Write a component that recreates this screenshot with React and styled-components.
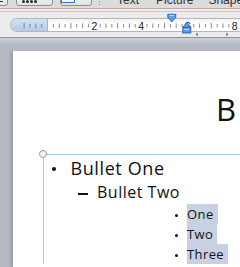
import React from "react";
import styled, { createGlobalStyle } from "styled-components";

const Global = createGlobalStyle`
  html, body { margin: 0; padding: 0; background: #b7bbc6; }
  body { width: 240px; height: 267px; overflow: hidden; }
  * { box-sizing: border-box; }
`;

const Screen = styled.div`
  width: 240px;
  height: 267px;
  overflow: hidden;
  display: flex;
  flex-direction: column;
  background: #b7bbc6;
`;

const Toolbar = styled.div`
  height: 9px;
  flex: none;
  display: flex;
  align-items: flex-start;
  overflow: hidden;
  background: #dcdcdc;
  border-bottom: 1px solid #bea79f;
`;

const ToolButton = styled.div`
  flex: none;
  height: 16px;
  margin-top: -10px;
  margin-left: ${(p) => p.$ml}px;
  width: ${(p) => p.$w}px;
  border: 1px solid #8e8e8e;
  border-radius: 3px;
  background: linear-gradient(#fbfbfb, #e4e4e4);
  display: flex;
  align-items: flex-end;
  justify-content: ${(p) => p.$justify || "flex-start"};
  padding: 0 ${(p) => p.$pr || 0}px 2px ${(p) => p.$pl || 0}px;
  gap: 1px;
`;

const Dot = styled.span`
  width: 3px;
  height: 3px;
  border-radius: 50%;
  background: #2a2a2a;
`;

const Bar = styled.span`
  width: 3px;
  height: 1px;
  margin-bottom: 1px;
  background: #333;
  box-shadow: 0 -2px 0 #333;
`;

const FrameIcon = styled.span`
  width: 14px;
  height: 10px;
  margin-bottom: 0;
  border: 1px solid #3a6ed4;
  background: #f4f7fd;
`;

const Grip = styled.span`
  flex: none;
  margin-left: 7px;
  margin-top: 1px;
  width: 1px;
  height: 1px;
  background: #888;
  box-shadow: 0 3px 0 #888;
`;

const Label = styled.span`
  flex: none;
  margin-left: ${(p) => p.$ml}px;
  margin-top: -6px;
  font: 12px/12px "Liberation Sans", Arial, sans-serif;
  color: #333;
  white-space: nowrap;
`;

const Seam = styled.div`
  height: 3px;
  flex: none;
  background: #eeeeee;
  border-bottom: 1px solid #d9c2ba;
`;

const RulerBand = styled.div`
  position: relative;
  height: 26px;
  flex: none;
  background: #ececec;
  border-bottom: 1px solid #8d9099;
  padding: 6px 0 0 10px;
`;

const Ruler = styled.div`
  position: relative;
  height: 14px;
  display: flex;
  background: linear-gradient(#f3f3f3, #ffffff 40%);
  border: 1px solid #b3b6bd;
  border-right: none;
  border-radius: 7px 0 0 7px;
  overflow: hidden;
`;

const MarginPart = styled.div`
  width: 37px;
  flex: none;
  background: linear-gradient(#d4e2f2, #b4cbe6);
  border-right: 1px solid #9fb6d4;
`;

const Overlay = styled.svg`
  position: absolute;
  left: 0;
  top: 0;
  pointer-events: none;
`;

const Workspace = styled.div`
  flex: 1;
  display: flex;
  padding: 13px 0 0 13px;
  background: linear-gradient(#cfd2d9, #b6bac5 6px);
`;

const Page = styled.div`
  flex: 1;
  background: #ffffff;
  box-shadow: -1px 0 0 #9da1ad, -3px 0 2px rgba(0, 0, 0, 0.12);
  padding-top: 43px;
  font-family: "Open Sans", "Noto Sans", sans-serif;
  color: #111;
`;

const Title = styled.div`
  font-size: 31px;
  line-height: 31px;
  padding-left: 203px;
  white-space: nowrap;
`;

const TextBox = styled.div`
  position: relative;
  margin: 29px 0 0 30px;
  border-top: 1px solid #abc5f0;
  border-left: 1px solid #abc5f0;
  padding-top: 1px;
`;

const Handle = styled.span`
  position: absolute;
  left: -5px;
  top: -5px;
  width: 8px;
  height: 8px;
  border: 1px solid #9a9a9a;
  border-radius: 50%;
  background: #f6f6f6;
`;

const Row = styled.div`
  display: flex;
  align-items: center;
  height: ${(p) => p.$h}px;
  padding-left: ${(p) => p.$indent}px;
  font-size: ${(p) => p.$fs}px;
  line-height: ${(p) => p.$h}px;
  letter-spacing: ${(p) => p.$ls}px;
  white-space: nowrap;
`;

const Marker = styled.span`
  flex: none;
  width: ${(p) => p.$w}px;
  display: flex;
  align-items: center;
  margin-top: ${(p) => p.$mt}px;
`;

const Bullet = styled.span`
  width: ${(p) => p.$d}px;
  height: ${(p) => p.$d}px;
  border-radius: 50%;
  background: #111;
`;

const Dash = styled.span`
  width: 10px;
  height: 1.6px;
  background: #111;
`;

const Selected = styled.span`
  display: inline-block;
  height: 100%;
  padding-right: 4px;
  background: #c7d1e3;
`;

const UNIT = 23.4;
const ZERO = 36.5;

function RulerMarks() {
  const ticks = [];
  for (let k = -4; k <= 36; k++) {
    const x = ZERO + k * (UNIT / 4);
    if (x < 3) continue;
    const whole = k % 4 === 0;
    const n = k / 4;
    if (whole && n >= 2 && n % 2 === 0) continue;
    if (k === 0) continue;
    const half = k % 2 === 0;
    const y1 = whole ? 4 : half ? 4.5 : 5;
    const y2 = whole ? 9.5 : half ? 9 : 8.5;
    ticks.push(<line key={k} x1={x} x2={x} y1={y1} y2={y2} stroke="#6e6e6e" strokeWidth="0.8" />);
  }
  const labels = [2, 4, 6, 8].map((n) => (
    <text
      key={n}
      x={ZERO + n * UNIT}
      y={10.6}
      textAnchor="middle"
      fontSize="10.5"
      fontFamily="Liberation Sans, Arial, sans-serif"
      fill="#222"
    >
      {n}
    </text>
  ));
  return (
    <Overlay width="240" height="12" viewBox="0 0 240 12">
      {ticks}
      {labels}
    </Overlay>
  );
}

function IndentMarkers() {
  return (
    <Overlay width="240" height="26" viewBox="0 0 240 26">
      <path d="M167.8,2.3 h8 v3 l-4,4.6 l-4,-4.6 z" fill="#5c9ce8" stroke="#2a5fb5" strokeWidth="0.9" />
      <path d="M169.3,3.6 h5" stroke="#cfe2fb" strokeWidth="0.9" />
      <path d="M182.8,15.2 l4,-5 l4,5 z" fill="#5c9ce8" stroke="#2a5fb5" strokeWidth="0.9" />
      <rect x="182.8" y="15.6" width="8" height="5.4" fill="#5c9ce8" stroke="#2a5fb5" strokeWidth="0.9" />
      <path d="M184.2,17.3 h5" stroke="#cfe2fb" strokeWidth="0.9" />
      <path d="M197,21 v3 M227,21 v3" stroke="#444" strokeWidth="1" />
    </Overlay>
  );
}

export default function App() {
  return (
    <>
      <Global />
      <Screen>
        <Toolbar>
          <ToolButton $ml={-20} $w={28} $justify="flex-end" $pr={4}>
            <Bar />
          </ToolButton>
          <ToolButton $ml={8} $w={37} $pl={5}>
            <Dot />
            <Dot />
            <Dot />
            <Dot />
          </ToolButton>
          <ToolButton $ml={7} $w={32} $pl={0}>
            <FrameIcon />
          </ToolButton>
          <Grip />
          <Label $ml={17}>Text</Label>
          <Label $ml={17}>Picture</Label>
          <Label $ml={15}>Shape</Label>
        </Toolbar>
        <Seam />
        <RulerBand>
          <Ruler>
            <MarginPart />
            <RulerMarks />
          </Ruler>
          <IndentMarkers />
        </RulerBand>
        <Workspace>
          <Page>
            <Title>B</Title>
            <TextBox>
              <Handle />
              <Row $h={24} $indent={8} $fs={18} $ls={0.6}>
                <Marker $w={18.5} $mt={2}>
                  <Bullet $d={4} />
                </Marker>
                <span>Bullet One</span>
              </Row>
              <Row $h={24} $indent={34} $fs={16} $ls={0.5}>
                <Marker $w={19} $mt={4}>
                  <Dash />
                </Marker>
                <span>Bullet Two</span>
              </Row>
              {["One", "Two", "Three"].map((t) => (
                <Row key={t} $h={20} $indent={131} $fs={13} $ls={0.4}>
                  <Marker $w={12} $mt={2}>
                    <Bullet $d={3} />
                  </Marker>
                  <Selected>{t}</Selected>
                </Row>
              ))}
            </TextBox>
          </Page>
        </Workspace>
      </Screen>
    </>
  );
}
